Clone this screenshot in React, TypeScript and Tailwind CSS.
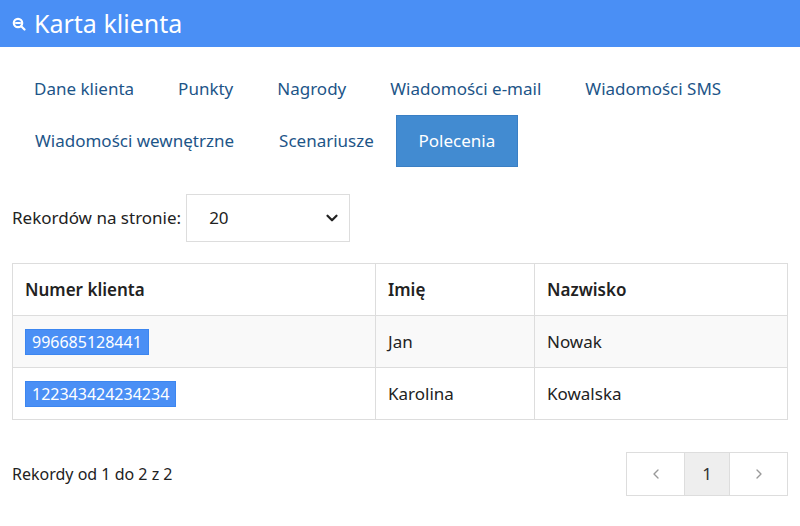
import { ChevronLeft, ChevronRight, ChevronDown } from 'lucide-react'

export default function App() {
  const tabs1 = ['Dane klienta', 'Punkty', 'Nagrody', 'Wiadomości e-mail', 'Wiadomości SMS']
  const rows = [
    { id: '996685128441', name: 'Jan', last: 'Nowak' },
    { id: '122343424234234', name: 'Karolina', last: 'Kowalska' },
  ]
  return (
    <div className="w-[800px] h-[526px] bg-white font-['Open_Sans',sans-serif] text-[#222]">
      <div className="h-[47px] bg-[#4a8ff5] flex items-center px-3 gap-2 text-white">
        <svg width="14" height="14" viewBox="0 0 14 14" fill="none" stroke="white" strokeWidth="2.2">
          <circle cx="6" cy="6" r="4.2" />
          <path d="M4 6h4M9.2 9.2l3.3 3.3" strokeLinecap="round" />
        </svg>
        <span className="text-[25px] leading-none">Karta klienta</span>
      </div>

      <div className="px-[12px] pt-[16px] text-[17px] text-[#1d5588]">
        <div className="flex h-[52px] items-center">
          {tabs1.map((t) => (
            <div key={t} className="px-[22px]">{t}</div>
          ))}
        </div>
        <div className="flex h-[52px] items-center">
          <div className="px-[23px]">Wiadomości wewnętrzne</div>
          <div className="px-[22px]">Scenariusze</div>
          <div className="h-[52px] w-[122px] flex items-center justify-center bg-[#428bd1] text-white border border-[#3a7fc4]">Polecenia</div>
        </div>
      </div>

      <div className="px-[12px] mt-[27px] flex items-center gap-[5px] text-[17px]">
        <span>Rekordów na stronie:</span>
        <div className="w-[164px] h-[48px] border border-[#ddd] flex items-center justify-between pl-[22px] pr-[8px]">
          <span>20</span>
          <ChevronDown size={18} strokeWidth={3} />
        </div>
      </div>

      <div className="mx-[12px] mt-[21px] border border-[#ddd] text-[17px]">
        <div className="grid grid-cols-[363px_159px_1fr] h-[51px] items-stretch font-semibold">
          <div className="px-[12px] flex items-center border-r border-[#ddd]">Numer klienta</div>
          <div className="px-[12px] flex items-center border-r border-[#ddd]">Imię</div>
          <div className="px-[12px] flex items-center">Nazwisko</div>
        </div>
        {rows.map((r, i) => (
          <div key={r.id} className={`grid grid-cols-[363px_159px_1fr] h-[52px] border-t border-[#ddd] ${i === 0 ? 'bg-[#f9f9f9]' : 'bg-white'}`}>
            <div className="px-[12px] flex items-center border-r border-[#ddd]">
              <span className="bg-[#4a8ff5] text-white text-[16px] px-[6px] h-[26px] flex items-center border border-[#3c86f0]">{r.id}</span>
            </div>
            <div className="px-[12px] flex items-center border-r border-[#ddd]">{r.name}</div>
            <div className="px-[12px] flex items-center">{r.last}</div>
          </div>
        ))}
      </div>

      <div className="mx-[12px] mt-[32px] flex items-center justify-between">
        <span className="text-[16px]">Rekordy od 1 do 2 z 2</span>
        <div className="flex h-[44px] border border-[#ddd] text-[#999]">
          <div className="w-[57px] flex items-center justify-center"><ChevronLeft size={16} /></div>
          <div className="w-[46px] flex items-center justify-center bg-[#eee] border-x border-[#ddd] text-[#333] text-[17px]">1</div>
          <div className="w-[57px] flex items-center justify-center"><ChevronRight size={16} /></div>
        </div>
      </div>
    </div>
  )
}
